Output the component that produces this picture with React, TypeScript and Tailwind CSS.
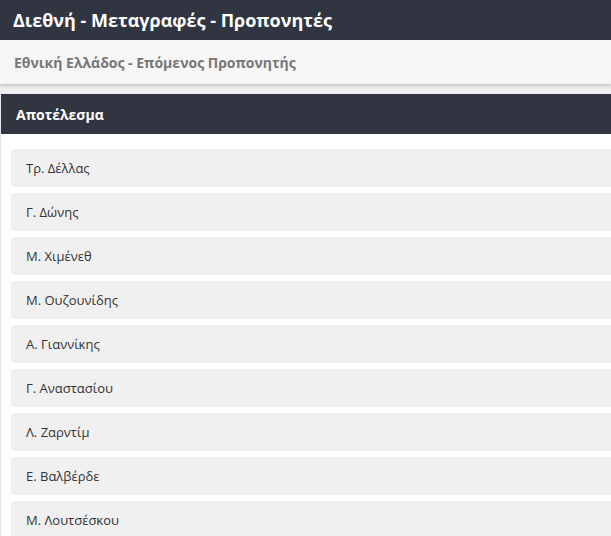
const names = [
  'Τρ. Δέλλας',
  'Γ. Δώνης',
  'Μ. Χιμένεθ',
  'Μ. Ουζουνίδης',
  'Α. Γιαννίκης',
  'Γ. Αναστασίου',
  'Λ. Ζαρντίμ',
  'Ε. Βαλβέρδε',
  'Μ. Λουτσέσκου',
];

export default function App() {
  return (
    <div className="w-[611px] h-[536px] overflow-hidden bg-[#efefef] font-['Open_Sans',sans-serif]">
      <div className="h-[40px] bg-[#313541] px-[13px] flex items-center">
        <h1 className="text-[18px] font-bold text-white">Διεθνή - Μεταγραφές - Προπονητές</h1>
      </div>
      <div className="h-[44px] bg-[#f6f6f6] px-[14px] pt-[1px] flex items-center shadow-[0_2px_3px_rgba(0,0,0,0.18)] relative">
        <h2 className="text-[14px] font-bold text-[#777]">Εθνική Ελλάδος - Επόμενος Προπονητής</h2>
      </div>
      <div className="mt-[10px] border-l border-[#e4e4e4] bg-white">
        <div className="h-[40px] bg-[#313541] px-[15px] flex items-center">
          <h3 className="text-[14px] font-bold text-white">Αποτέλεσμα</h3>
        </div>
        <ul className="pt-[15px] pl-[10px] flex flex-col gap-[6px] mr-[-10px]">
          {names.map((n) => (
            <li
              key={n}
              className="h-[38px] rounded-[4px] bg-[#f0f0f0] px-[15px] pt-[1px] flex items-center text-[13px] text-[#333]"
            >
              {n}
            </li>
          ))}
        </ul>
      </div>
    </div>
  );
}
